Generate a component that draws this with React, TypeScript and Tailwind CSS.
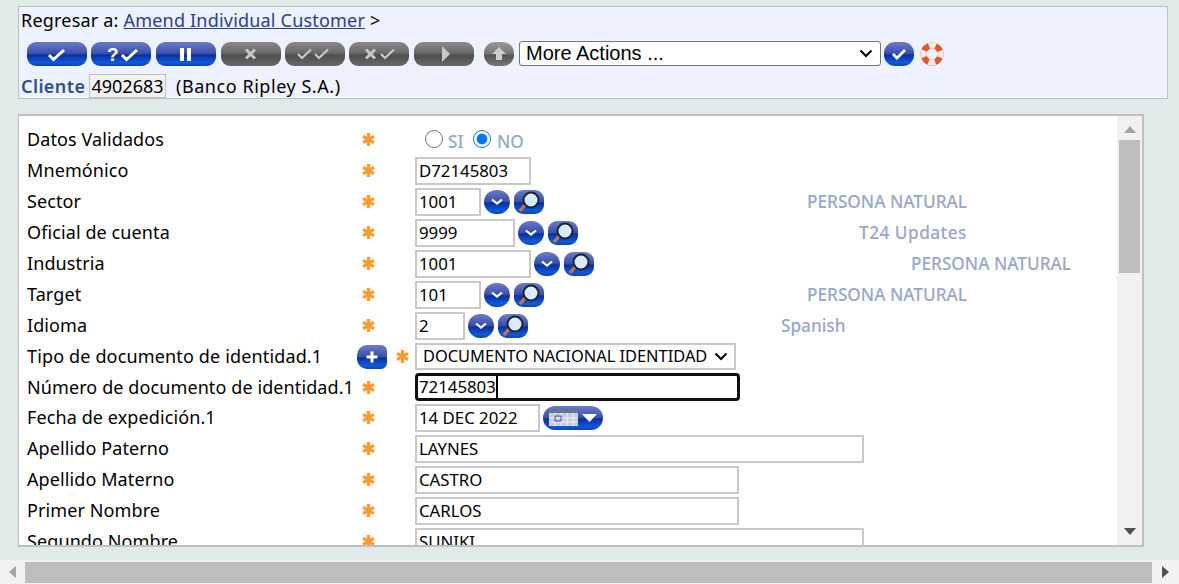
import { FC, ReactNode } from "react";

const font = { fontFamily: '"Noto Sans", sans-serif' };

const Star: FC = () => (
  <svg width="13" height="13" viewBox="0 0 12 12" className="shrink-0">
    <g stroke="#ff9a2e" strokeWidth="3" strokeLinecap="butt">
      <line x1="6" y1="0" x2="6" y2="12" />
      <line x1="1" y1="3.1" x2="11" y2="8.9" />
      <line x1="11" y1="3.1" x2="1" y2="8.9" />
    </g>
  </svg>
);

const PillIcon: FC<{ kind: string }> = ({ kind }) => {
  const check = (x: number) => <path d={`M${x} 13l4.5 4.5 10.5-9.5`} fill="none" stroke="#fff" strokeWidth="3" />;
  const thin = (x: number) => <path d={`M${x} 12l4 4 9-8.5`} fill="none" stroke="#c8c8c8" strokeWidth="2.2" />;
  const cross = (x: number) => <path d={`M${x} 7.5l9 9m0-9l-9 9`} fill="none" stroke="#c8c8c8" strokeWidth="3" />;
  if (kind === "check") return check(22);
  if (kind === "qcheck")
    return (
      <>
        <text x="16" y="19" fontSize="19" fontWeight="700" fill="#fff" fontFamily="Liberation Sans">?</text>
        {check(31)}
      </>
    );
  if (kind === "pause")
    return (
      <>
        <rect x="24" y="6" width="4" height="13" fill="#fff" />
        <rect x="31" y="6" width="4" height="13" fill="#fff" />
      </>
    );
  if (kind === "x") return cross(25);
  if (kind === "cc")
    return (
      <>
        {thin(13)}
        {thin(30)}
      </>
    );
  if (kind === "xc")
    return (
      <>
        {cross(17)}
        {thin(32)}
      </>
    );
  return <path d="M28 4l8 8-8 8z" fill="#c8c8c8" />;
};

const Pill: FC<{ kind: string; gray?: boolean; ml?: string }> = ({ kind, gray, ml }) => (
  <div
    className={`h-6 w-[60px] shrink-0 rounded-[9px] ${ml ?? ""} ${
      gray
        ? "bg-[linear-gradient(#8a8a8a_0%,#6a6a6a_45%,#4e4e4e_55%,#686868_100%)]"
        : "bg-[linear-gradient(#6a7cca_0%,#3a4fa8_48%,#0a2f9f_54%,#0f58dc_85%,#0b46b0_100%)]"
    }`}
  >
    <svg width="60" height="24" viewBox="0 0 60 24">
      <PillIcon kind={kind} />
    </svg>
  </div>
);

const RoundBlue: FC<{ children: ReactNode; w?: string; r?: string }> = ({ children, w = "w-[30px]", r = "rounded-[11px]" }) => (
  <div
    className={`h-6 ${w} ${r} shrink-0 bg-[linear-gradient(#6a7cca_0%,#3a4fa8_48%,#0a2f9f_54%,#0f58dc_85%,#0b46b0_100%)] flex items-center justify-center`}
  >
    {children}
  </div>
);

const DropBtn: FC = () => (
  <RoundBlue w="w-[26px]" r="rounded-full">
    <svg width="14" height="8" viewBox="0 0 14 8">
      <path d="M2 1.5l5 4 5-4" fill="none" stroke="#fff" strokeWidth="2.2" />
    </svg>
  </RoundBlue>
);

const LensBtn: FC = () => (
  <RoundBlue r="rounded-[9px]">
    <svg width="30" height="24" viewBox="0 0 30 24">
      <path d="M11 15l-5 6" stroke="#c8743a" strokeWidth="3.4" />
      <circle cx="17" cy="10" r="7.5" fill="#d7ecfb" stroke="#1c2436" strokeWidth="2" />
    </svg>
  </RoundBlue>
);

const Field: FC<{ value: string; w: string }> = ({ value, w }) => (
  <input
    readOnly
    value={value}
    style={font}
    className={`${w} h-7 border-2 border-[#c8c8c8] bg-white px-[2px] text-[16.8px] text-black outline-none`}
  />
);

const Hint: FC<{ text: string; ml: string; wide?: boolean }> = ({ text, ml, wide }) => (
  <span className={`${ml} text-[17.2px] ${wide ? "tracking-[0.5px]" : ""} text-[#98a6c8] font-medium whitespace-nowrap`}>{text}</span>
);

const Lookup: FC<{ value: string; w: string; hint: string; ml: string; wide?: boolean }> = ({ value, w, hint, ml, wide }) => (
  <>
    <Field value={value} w={w} />
    <div className="ml-[3px]"><DropBtn /></div>
    <div className="ml-[4px]"><LensBtn /></div>
    <Hint text={hint} ml={ml} wide={wide} />
  </>
);

const Row: FC<{ label: string; children: ReactNode; plus?: boolean; short?: boolean }> = ({ label, children, plus, short }) => (
  <div className={`flex ${short ? "h-[30px]" : "h-[31px]"} shrink-0 items-center`}>
    {plus ? (
      <>
        <span className="w-[330px] whitespace-nowrap tracking-[0.15px]">{label}</span>
        <div className="h-6 w-[30px] rounded-l-[10px] rounded-r-[6px] bg-[linear-gradient(#6a7cca_0%,#3a4fa8_48%,#0a2f9f_54%,#0f58dc_85%,#0b46b0_100%)] flex items-center justify-center">
          <svg width="14" height="14" viewBox="0 0 14 14">
            <path d="M7 1.5v11M1.5 7h11" stroke="#fff" strokeWidth="3" />
          </svg>
        </div>
        <div className="ml-[9px] mr-[6px]">
          <Star />
        </div>
      </>
    ) : (
      <>
        <span className="w-[335px] whitespace-nowrap tracking-[0.1px]">{label}</span>
        <Star />
        <div className="w-[40px]" />
      </>
    )}
    <div className="flex items-center">{children}</div>
  </div>
);

export default function App() {
  return (
    <div style={font} className="flex h-[584px] w-[1179px] flex-col overflow-hidden bg-[#e0eae8] text-[18px] text-black">
      <div className="mx-[18px] mt-[6px] h-[93px] w-[1150px] shrink-0 border border-[#c0c0c0] bg-[#eef2fe] pl-[2px]">
        <div className="flex h-[27px] items-center tracking-[0.2px]">
          Regresar a:&nbsp;
          <a className="text-[#27408b] underline">Amend Individual Customer</a>
          &nbsp;&gt;
        </div>
        <div className="mt-[7px] flex h-[25px] items-center pl-[6px]">
          <Pill kind="check" />
          <Pill kind="qcheck" ml="ml-[4px]" />
          <Pill kind="pause" ml="ml-[5px]" />
          <Pill kind="x" gray ml="ml-[5px]" />
          <Pill kind="cc" gray ml="ml-[4px]" />
          <Pill kind="xc" gray ml="ml-[4px]" />
          <Pill kind="play" gray ml="ml-[5px]" />
          <div className="ml-[10px] h-6 w-[30px] rounded-[11px] bg-[linear-gradient(#9a9a9a_0%,#777_48%,#555_56%,#777_100%)] flex items-center justify-center">
            <svg width="16" height="16" viewBox="0 0 16 16">
              <path d="M8 1l7 7h-4v6H5V8H1z" fill="#ccc" />
            </svg>
          </div>
          <div
            style={{ fontFamily: '"Liberation Sans", sans-serif' }}
            className="ml-[5px] flex h-[25px] w-[362px] items-center justify-between rounded-[3px] border border-[#767676] bg-white pb-[2px] pl-[6px] pr-[7px] text-[20px]"
          >
            More Actions ...
            <svg width="14" height="9" viewBox="0 0 14 9" className="mt-[2px]">
              <path d="M1.5 1.5L7 7l5.5-5.5" fill="none" stroke="#000" strokeWidth="2" />
            </svg>
          </div>
          <div className="ml-[3px]">
            <RoundBlue>
              <svg width="18" height="14" viewBox="0 0 18 14">
                <path d="M3 7l4 4 8-8" fill="none" stroke="#fff" strokeWidth="2.8" />
              </svg>
            </RoundBlue>
          </div>
          <svg width="24" height="24" viewBox="0 0 24 24" className="ml-[6px]">
            <circle cx="12" cy="12" r="8.5" fill="none" stroke="#e0552a" strokeWidth="6" />
            <circle cx="12" cy="12" r="8.5" fill="none" stroke="#f3ece6" strokeWidth="6" strokeDasharray="6.7 6.65" strokeDashoffset="3.3" />
          </svg>
        </div>
        <div className="mt-[8px] flex h-6 items-center">
          <span className="w-[68px] font-semibold tracking-[0.4px] text-[#2f4f8f]">Cliente</span>
          <span className="flex h-6 w-[77px] items-center justify-center border border-[#c0c0c0] bg-[#f2f2f2]">4902683</span>
          <span className="ml-[10px] tracking-[0.55px]">(Banco Ripley S.A.)</span>
        </div>
      </div>

      <div className="ml-[18px] mt-[15px] flex h-[433px] w-[1126px] shrink-0 overflow-hidden border-b-2 border-r-2 border-t-2 border-l border-[#c0c0c0] bg-white">
        <div className="flex min-w-0 flex-1 flex-col overflow-hidden pl-2 pt-[8px]">
          <Row label="Datos Validados">
            <div className="ml-[10px] flex items-center text-[17.2px] font-medium text-[#98a6c8]">
              <input type="radio" name="dv" className="m-0 size-[18px]" />
              <span className="ml-[5px] mt-[5px] w-[25px]">SI</span>
              <input type="radio" name="dv" defaultChecked className="m-0 size-[18px]" />
              <span className="ml-[6px] mt-[5px]">NO</span>
            </div>
          </Row>
          <Row label="Mnemónico">
            <Field value="D72145803" w="w-[116px]" />
          </Row>
          <Row label="Sector">
            <Lookup value="1001" w="w-[66px]" hint="PERSONA NATURAL" ml="ml-[263px]" />
          </Row>
          <Row label="Oficial de cuenta">
            <Lookup value="9999" w="w-[100px]" hint="T24 Updates" ml="ml-[281px]" wide />
          </Row>
          <Row label="Industria">
            <Lookup value="1001" w="w-[116px]" hint="PERSONA NATURAL" ml="ml-[317px]" />
          </Row>
          <Row label="Target">
            <Lookup value="101" w="w-[66px]" hint="PERSONA NATURAL" ml="ml-[263px]" />
          </Row>
          <Row label="Idioma">
            <Lookup value="2" w="w-[50px]" hint="Spanish" ml="ml-[253px]" />
          </Row>
          <Row label="Tipo de documento de identidad.1" plus>
            <div className="flex h-[27px] w-[321px] items-center justify-between border-2 border-[#c8c8c8] bg-white pl-[6px] pr-[6px] text-[16.4px]">
              DOCUMENTO NACIONAL IDENTIDAD
              <svg width="14" height="9" viewBox="0 0 14 9">
                <path d="M1.5 1.5L7 7l5.5-5.5" fill="none" stroke="#000" strokeWidth="2" />
              </svg>
            </div>
          </Row>
          <Row label="Número de documento de identidad.1" short>
            <div className="flex h-7 w-[325px] items-center rounded-[4px] border-[3px] border-[#101010] bg-white px-[1px] text-[16.8px]">
              <span className="border-r-2 border-black leading-[22px]">72145803</span>
            </div>
          </Row>
          <Row label="Fecha de expedición.1">
            <Field value="14 DEC 2022" w="w-[125px]" />
            <div className="ml-[3px] flex h-6 w-[60px] items-center justify-between rounded-full bg-[linear-gradient(#6a7cca_0%,#3a4fa8_48%,#0a2f9f_54%,#0f58dc_85%,#0b46b0_100%)] pl-[6px] pr-[6px]">
              <svg width="29" height="16" viewBox="0 0 29 16">
                <rect x="0" y="0" width="29" height="16" fill="#c8ccd8" />
                <rect x="0" y="0" width="29" height="3" fill="#6d7488" />
                <path d="M6 3v13M12 3v13M18 3v13M24 3v13M0 8h29M0 12h29" stroke="#eef0f5" />
                <rect x="6" y="6" width="6" height="5" fill="none" stroke="#2a4fc0" />
              </svg>
              <svg width="15" height="8" viewBox="0 0 15 8">
                <path d="M0 0h15L7.5 8z" fill="#fff" />
              </svg>
            </div>
          </Row>
          <Row label="Apellido Paterno">
            <Field value="LAYNES" w="w-[449px]" />
          </Row>
          <Row label="Apellido Materno">
            <Field value="CASTRO" w="w-[324px]" />
          </Row>
          <Row label="Primer Nombre">
            <Field value="CARLOS" w="w-[324px]" />
          </Row>
          <Row label="Segundo Nombre">
            <Field value="SUNIKI" w="w-[449px]" />
          </Row>
        </div>
        <div className="flex w-[25px] shrink-0 flex-col items-center bg-[#f1f1f1]">
          <svg width="12" height="7" viewBox="0 0 12 7" className="mt-[10px]">
            <path d="M6 0l6 7H0z" fill="#a3a3a3" />
          </svg>
          <div className="mt-[7px] h-[133px] w-[21px] bg-[#bdbdbd]" />
          <svg width="12" height="7" viewBox="0 0 12 7" className="mt-auto mb-[10px]">
            <path d="M0 0h12L6 7z" fill="#505050" />
          </svg>
        </div>
      </div>

      <div className="mt-[13px] flex h-6 shrink-0 items-center bg-[#f1f1f1]">
        <div className="flex w-[25px] justify-center">
          <svg width="7" height="12" viewBox="0 0 7 12">
            <path d="M7 0v12L0 6z" fill="#a3a3a3" />
          </svg>
        </div>
        <div className="h-[21px] w-[1127px] bg-[#bdbdbd]" />
        <div className="flex flex-1 justify-center">
          <svg width="7" height="12" viewBox="0 0 7 12">
            <path d="M0 0v12l7-6z" fill="#505050" />
          </svg>
        </div>
      </div>
    </div>
  );
}
